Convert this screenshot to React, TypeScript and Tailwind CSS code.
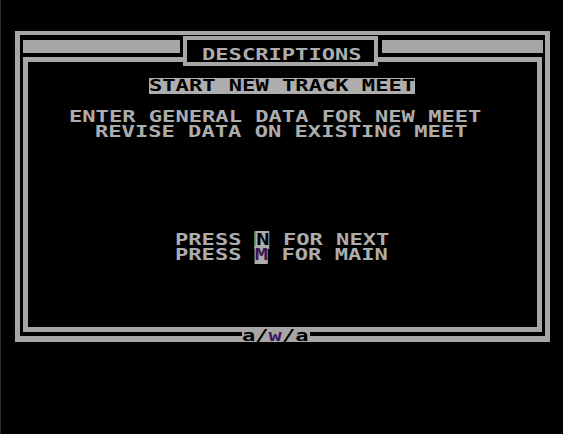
import type { ReactNode } from "react";

// one text row on the 40-column grid; glyphs are widened to the wide cell
const Line = ({ children, className = "" }: { children: ReactNode; className?: string }) => (
  <div className={`h-[15px] leading-[15px] ${className}`}>
    <span className="inline-block origin-left scale-x-[1.473] whitespace-pre">{children}</span>
  </div>
);

const App = () => {
  return (
    <div className="h-[434px] w-[563px] overflow-hidden border-l border-[#2e2e2e] bg-black pt-[31px] font-['DejaVu_Sans_Mono',monospace] text-[15px] font-bold text-[#adadad]">
      {/* outer frame */}
      <div className="relative ml-[14px] h-[311px] w-[535px] border-x-[5px] border-t-4 border-b-[6px] border-[#a6a6a6]">
        {/* title row */}
        <div className="flex h-[22px] items-start">
          <div className="ml-[3px] mt-[5px] h-[13px] w-[157px] bg-[#a6a6a6]" />
          {/* title tab drops into the inner frame's top edge */}
          <div className="relative z-10 ml-[3px] mt-[1px] h-[30px] w-[195px] shrink-0 border-4 border-[#a6a6a6] bg-black">
            <Line className="ml-[14.5px] mt-[7.75px]">DESCRIPTIONS</Line>
          </div>
          <div className="ml-[4px] mt-[5px] h-[13px] w-[161px] bg-[#a6a6a6]" />
        </div>

        {/* inner frame */}
        <div className="ml-[3px] h-[275px] w-[519px] border-[5px] border-[#a6a6a6]">
          <div className="ml-[120.5px] mt-[16px] h-[16px] w-[266px] bg-[#adadad] text-black">
            <Line className="pt-[0.5px]">START NEW TRACK MEET</Line>
          </div>

          <Line className="ml-[40.5px] mt-[15.75px]">ENTER GENERAL DATA FOR NEW MEET</Line>
          <Line className="ml-[67px]">REVISE DATA ON EXISTING MEET</Line>

          <Line className="ml-[147px] mt-[93.5px]">
            PRESS <span className="border-l border-[#4caf50] bg-[#adadad] text-black">N</span> FOR NEXT
          </Line>
          <Line className="ml-[147px]">
            PRESS <span className="bg-[#adadad] text-[#3a1850]">M</span> FOR MAIN
          </Line>
        </div>

        {/* footer tag across the bottom borders */}
        <div className="absolute left-[222px] top-[294px] h-[12px] w-[68px] bg-[#a6a6a6] text-black">
          <div className="h-[12px] pt-[1px] leading-[12px]">
            <span className="inline-block origin-left scale-x-[1.473] whitespace-pre">
              a/<span className="text-[#3b1a5c]">w</span>/a
            </span>
          </div>
        </div>
      </div>
    </div>
  );
};

export default App;
